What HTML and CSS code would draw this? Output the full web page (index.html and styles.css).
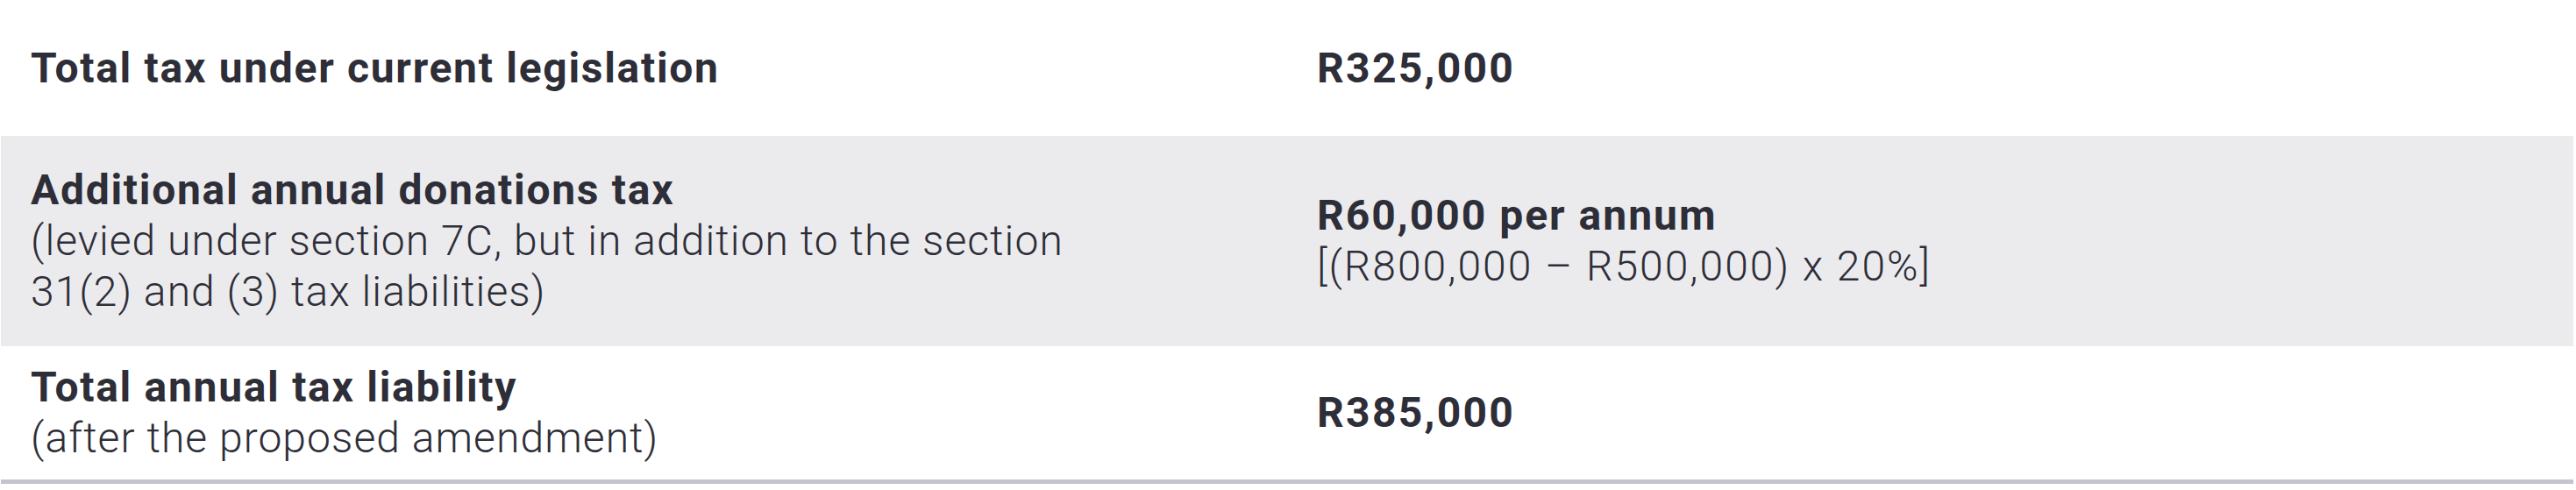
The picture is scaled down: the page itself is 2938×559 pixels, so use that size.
FILE: index.html
```html
<!DOCTYPE html>
<html lang="en">
<head>
<meta charset="utf-8">
<title>Tax comparison</title>
<link rel="stylesheet" href="styles.css">
</head>
<body>
<div class="table">
  <div class="row row-first">
    <div class="cell"><strong>Total tax under current legislation</strong></div>
    <div class="cell figure"><strong>R325,000</strong></div>
  </div>
  <div class="row row-shaded">
    <div class="cell"><strong>Additional annual donations tax</strong><br>(levied under section 7C, but in addition to the section<br>31(2) and (3) tax liabilities)</div>
    <div class="cell figure"><strong class="figure-label">R60,000 per annum</strong><br>[(R800,000 – R500,000) x 20%]</div>
  </div>
  <div class="row row-last">
    <div class="cell"><strong>Total annual tax liability</strong><br>(after the proposed amendment)</div>
    <div class="cell figure"><strong>R385,000</strong></div>
  </div>
</div>
</body>
</html>
```

FILE: styles.css
```css
html, body {
  margin: 0;
  padding: 0;
  background: #ffffff;
}
body {
  font-family: Roboto, "Liberation Sans", sans-serif;
  font-weight: 300;
  font-size: 48px;
  line-height: 58px;
  color: #2e2e38;
  letter-spacing: 1.05px;
}
.table {
  margin-left: 1px;
  width: 2934px;
  border-bottom: 5px solid #c4c4cd;
}
.row {
  display: grid;
  grid-template-columns: 1fr 1fr;
  align-items: center;
}
.row-first { height: 155px; }
.row-shaded { height: 240px; background: #ebebee; }
.row-last { height: 152px; }
.cell {
  padding-left: 34px;
  white-space: nowrap;
}
strong {
  font-weight: 700;
  letter-spacing: 1.7px;
}
.figure {
  letter-spacing: 2px;
}
.figure strong {
  letter-spacing: 2.3px;
}
.figure .figure-label {
  letter-spacing: 2px;
}
```
